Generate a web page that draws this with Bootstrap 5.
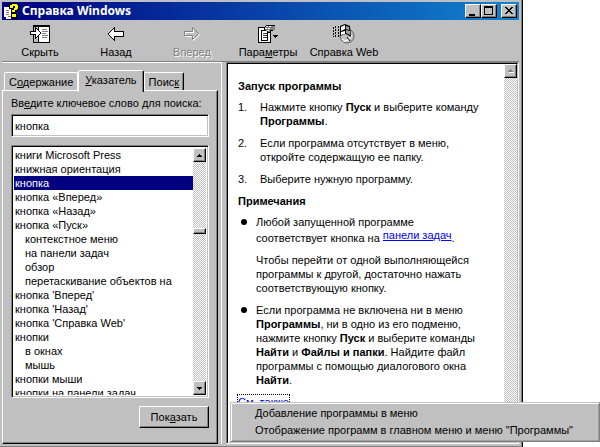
<!DOCTYPE html>
<html lang="ru">
<head>
<meta charset="utf-8">
<meta name="viewport" content="width=device-width, initial-scale=1">
<title>Справка Windows</title>
<link href="https://cdn.jsdelivr.net/npm/bootstrap@5.3.0/dist/css/bootstrap.min.css" rel="stylesheet">
<script src="https://cdn.jsdelivr.net/npm/bootstrap@5.3.0/dist/js/bootstrap.bundle.min.js"></script>
<style>
  :root { --face: #c0c0c0; --shade: #808080; --navy: #000080; }
  body { font: 11px/14px "Liberation Sans", Arial, sans-serif; color: #000; background: #fff; }
  button, input { font: inherit; color: inherit; border-radius: 0; }
  svg { display: block; shape-rendering: crispEdges; }
  .smooth { shape-rendering: auto; }
  .help-window { margin-right: 77px; padding: 2px 3px 3px 2px; background: var(--face); border-right: 1px solid #000; box-shadow: inset -1px 0 var(--shade), inset 0 -1px var(--shade); }
  .title-strip { height: 18px; padding: 0 2px; background: linear-gradient(90deg, #000080, #1084d0); color: #fff; }
  .title-strip h1 { font: bold 12px/18px "Noto Sans", sans-serif; margin: 0 0 0 2px; }
  .raised { background: var(--face); border: 1px solid; border-color: #fff #000 #000 #fff; box-shadow: inset -1px -1px var(--shade); padding: 0; }
  .win-btn { width: 16px; height: 14px; }
  .tool-strip { border-bottom: 1px solid var(--shade); height: 42px; }
  .tool { width: 76px; border: 0; background: none; padding: 4px 0 0; white-space: nowrap; display: flex; flex-direction: column; align-items: center; }
  .tool svg { margin-bottom: 1px; }
  .tool:disabled { color: var(--shade); text-shadow: 1px 1px #fff; }
  .panes { min-height: 0; }
  .left-side { width: 220px; padding-top: 7px; padding-right: 4px; border-top: 1px solid #fff; }
  .help-tabs { padding-left: 2px; height: 20px; align-items: flex-end; }
  .help-tabs .tab-btn { height: 18px; padding: 0 4px; background: var(--face); border: 1px solid #fff; border-bottom: 0; border-radius: 2px 2px 0 0; }
  .help-tabs .tab-btn.active { height: 22px; margin-bottom: -2px; padding: 0 6px 4px; position: relative; z-index: 1; border-right: 1px solid #000; box-shadow: inset -1px 0 var(--shade); }
  .help-tabs .tab-last { border-right-color: #000; box-shadow: inset -1px 0 var(--shade); }
  .index-pane { border: 1px solid; border-color: #fff #000 #000 #fff; box-shadow: inset -1px -1px var(--shade); padding: 5px 8px 15px; min-height: 0; }
  .sunken { background: #fff; border: 1px solid; border-color: var(--shade) #fff #fff var(--shade); box-shadow: inset 1px 1px #000, inset -1px -1px var(--face); border-radius: 0; }
  .key-input { height: 23px; width: 100%; padding: 2px 3px; outline: 0; }
  .index-box { padding: 2px; flex: 1 1 0; min-height: 0; overflow: hidden; }
  .index-list { overflow: hidden; border-radius: 0; }
  .index-list button { border: 0; background: none; text-align: left; padding: 0 1px; height: 14px; flex: none; white-space: nowrap; overflow: hidden; }
  .index-list .sub { padding-left: 11px; }
  .index-list .chosen { background: var(--navy); color: #fff; }
  .track { width: 13px; flex: none; background: repeating-conic-gradient(#fff 0 25%, var(--face) 0 50%) 0 0 / 2px 2px; }
  .track button { width: 13px; height: 14px; flex: none; display: flex; align-items: center; justify-content: center; }
  .track .thumb { height: 6px; margin-top: 66px; }
  .show-btn { width: 70px; height: 22px; }
  .topic-frame { border: 1px solid; border-color: var(--shade) #fff #fff var(--shade); box-shadow: -4px 0 var(--face), -5px 0 #fff; min-width: 0; }
  .topic-inner { border: 1px solid; border-color: #000 var(--face) var(--face) #000; background: #fff; min-width: 0; }
  .topic { padding: 15px 14px 0 10px; overflow: hidden; }
  .topic h2 { font: bold 11px/14px "Liberation Sans", Arial, sans-serif; margin: 0 0 7px; }
  .topic p { margin: 0 0 8px; }
  .topic li { display: flex; }
  .topic ol .marker { width: 22px; flex: none; }
  .topic ul .marker { width: 18px; padding: 4px 0 0 3px; flex: none; }
  .topic ul .marker::before { content: ""; display: block; width: 6px; height: 6px; border-radius: 50%; background: #000; }
  .topic a { color: #00f; }
  .link-line { display: block; padding-top: 2px; }
  .link-line a { position: relative; top: -3px; }
  .see-also { display: inline-block; outline: 1px dotted #000; }
  .popup { position: absolute; left: 230px; right: 0; bottom: 5px; padding: 2px; background: var(--face); border: 1px solid; border-color: var(--face) var(--shade) var(--shade) var(--face); box-shadow: inset 1px 1px #fff, inset -1px -1px #a0a0a0; }
  .popup button { display: block; border: 0; background: none; padding: 0 0 0 22px; line-height: 17px; width: 100%; text-align: left; white-space: nowrap; }
</style>
</head>
<body class="position-relative">
<main class="help-window d-flex flex-column vh-100">
  <header class="title-strip d-flex align-items-center">
    <svg width="16" height="17" viewBox="0 0 16 17" aria-hidden="true">
      <path d="M0 4h7v6h4v6H2v-2H0z" fill="#fff"/><path d="M2 7h3v1H2zM2 9h3v1H2zM2 11h3v1H2zM4 13h3v1H4z" fill="#808080"/>
      <path d="M5 1h2V0h6v1h2v6h-2v2h-1v2h1v5H7V8h2V6h1V5H9v1H5z"/><path d="M6 2h2V1h5v1h1v4h-1v1h-2v2H8V7h2V5h1V3H9v2H6zM8 11h4v3H8z" fill="#ff0"/>
    </svg>
    <h1 class="flex-grow-1">Справка Windows</h1>
    <button class="raised win-btn" aria-label="Свернуть"><svg width="14" height="12"><path d="M3 9h6v2H3z"/></svg></button>
    <button class="raised win-btn" aria-label="Развернуть"><svg width="14" height="12"><path d="M2 1h9v9H2zM3 3v6h7V3z" fill-rule="evenodd"/></svg></button>
    <button class="raised win-btn ms-1" aria-label="Закрыть"><svg width="14" height="12"><path d="M3 2h2v1h1v1h2V3h1V2h2v1h-1v1H9v1H8v1h1v1h1v1h1v1H9V8H8V7H6v1H5v1H3V8h1V7h1V6h1V5H5V4H4V3H3z"/></svg></button>
  </header>
  <nav class="tool-strip d-flex" aria-label="Панель инструментов">
    <button class="tool"><svg width="20" height="20" viewBox="0 0 20 20" aria-hidden="true">
      <path d="M3 1h17v18H3z"/><path d="M4 3h4v15H4z" fill="#c0c0c0"/><path d="M9 3h10v15H9z" fill="#fff"/>
      <path d="M12 5h5v1h-5zM12 7h6v1h-6zM12 9h4v1h-4zM12 11h6v1h-6zM12 13h5v1h-5z" fill="#808080"/>
      <path d="M0 7h5V3h1v1h1v1h1v1h1v1h1v1h1v2h-1v1H9v1H8v1H7v1H6v1H5v-4H0z"/><path d="M1 8h5V5h1v1h1v1h1v1h1v2H9v1H8v1H7v1H6v-3H1z" fill="#fff"/></svg><span>Скрыть</span></button>
    <button class="tool"><svg width="16" height="20" viewBox="0 0 16 20" aria-hidden="true">
      <path d="M0 9h1V8h1V7h1V6h1V5h1V4h1V3h1v4h9v6H7v4H6v-1H5v-1H4v-1H3v-1H2v-1H1v-1H0z"/><path d="M1 10V9h1V8h1V7h1V6h1V5h1v3h9v4H6v3H5v-1H4v-1H3v-1H2v-1H1z" fill="#fff"/></svg><span>Назад</span></button>
    <button class="tool" disabled><svg class="smooth" width="17" height="20" viewBox="0 0 17 20" aria-hidden="true">
      <path d="M1.500 8.500h8v-4l6 6-6 6v-4h-8z" fill="none" stroke="#fff"/><path d="M.5 7.500h8v-4l6 6-6 6v-4h-8z" fill="none" stroke="#808080"/></svg><span>Вперед</span></button>
    <button class="tool"><svg width="22" height="20" viewBox="0 0 22 20" aria-hidden="true">
      <path d="M1 3h13v16H1z"/><path d="M2 4h11v14H2z" fill="#fff"/><path d="M4 6h7v11H4z"/><path d="M5 7h5v9H5z" fill="#fff"/><path d="M6 9h4v1H6zM6 11h4v1H6zM6 13h4v1H6z" fill="#404040"/>
      <path d="M7 4h1V2h1V1h9v5h-3v1h-2v2h-2V7H9V6H7z" fill="#808080"/><path d="M9 2h2v1H9zM12 2h2v1h-2zM8 4h2v1H8zM11 4h2v1h-2zM10 6h2v1h-2z" fill="#fff"/><path d="M7 4h1V2h1V1h9v1H9v1H8v3H7zM11 8h2V6h3v1h-2v2h-3z"/>
      <path d="M16 11h5v1h-1v1h-1v1h-1v-1h-1v-1h-1z"/></svg><span>Пара<u>м</u>етры</span></button>
    <button class="tool"><svg class="smooth" width="22" height="20" viewBox="0 0 22 20" aria-hidden="true">
      <circle cx="14" cy="12" r="7" fill="#c0c0c0" stroke="#606060"/><path d="M9 15q5 4 9-3M10 17q6 1 9-6" fill="none" stroke="#fff"/>
      <path d="M7 2l5-2 5 2 1 11-5-3-6 2z"/><path d="M8 3l4-2v4l-4 2zM8 8l4-1v3l-4 1z" fill="#fff"/><path d="M13 2l3 1v3l-3-1zM13 6l4 1v4l-4-2z" fill="#a0a0a0"/>
      <path d="M5.500 2v11M2.500 2v11M.5 3v10" stroke="#000" stroke-dasharray="2 1"/><path d="M14 13l3 4" stroke="#000"/></svg><span>Справка Web</span></button>
  </nav>
  <div class="panes d-flex flex-grow-1">
    <section class="left-side d-flex flex-column flex-shrink-0">
      <div class="help-tabs d-flex" role="tablist">
        <button class="tab-btn" role="tab">С<u>о</u>держание</button>
        <button class="tab-btn active" role="tab" aria-selected="true"><u>У</u>казатель</button>
        <button class="tab-btn tab-last" role="tab">Поис<u>к</u></button>
      </div>
      <div class="index-pane d-flex flex-column flex-grow-1" role="tabpanel">
        <label for="keyword" class="mb-1">Вв<u>е</u>дите ключевое слово для поиска:</label>
        <input id="keyword" class="sunken key-input" type="text" value="кнопка">
        <div class="index-box sunken d-flex mt-2">
          <div class="index-list list-group flex-grow-1">
            <button>книги Microsoft Press</button>
            <button>книжная ориентация</button>
            <button class="chosen">кнопка</button>
            <button>кнопка «Вперед»</button>
            <button>кнопка «Назад»</button>
            <button>кнопка «Пуск»</button>
            <button class="sub">контекстное меню</button>
            <button class="sub">на панели задач</button>
            <button class="sub">обзор</button>
            <button class="sub">перетаскивание объектов на</button>
            <button>кнопка 'Вперед'</button>
            <button>кнопка 'Назад'</button>
            <button>кнопка 'Справка Web'</button>
            <button>кнопки</button>
            <button class="sub">в окнах</button>
            <button class="sub">мышь</button>
            <button>кнопки мыши</button>
            <button>кнопки на панели задач</button>
          </div>
          <div class="track d-flex flex-column">
            <button class="raised" aria-label="Вверх"><svg width="5" height="3"><path d="M2 0h1v1h1v1h1v1H0V2h1V1h1z"/></svg></button>
            <button class="raised thumb" aria-label="Ползунок"></button>
            <button class="raised mt-auto" aria-label="Вниз"><svg width="5" height="3"><path d="M0 0h5v1H4v1H3v1H2V2H1V1H0z"/></svg></button>
          </div>
        </div>
        <button class="raised show-btn align-self-end mt-2">Пок<u>а</u>зать</button>
      </div>
    </section>
    <section class="topic-frame ms-1 flex-grow-1 d-flex">
      <div class="topic-inner d-flex flex-grow-1">
        <article class="topic flex-grow-1">
          <h2>Запуск программы</h2>
          <ol class="list-unstyled m-0">
            <li><span class="marker">1.</span><p>Нажмите кнопку <b>Пуск</b> и выберите команду <b>Программы</b>.</p></li>
            <li><span class="marker">2.</span><p>Если программа отсутствует в меню,<br>откройте содержащую ее папку.</p></li>
            <li><span class="marker">3.</span><p>Выберите нужную программу.</p></li>
          </ol>
          <h2>Примечания</h2>
          <ul class="list-unstyled m-0">
            <li><span class="marker"></span><div><p>Любой запущенной программе <span class="link-line">соответствует кнопка на <a href="#taskbar">панели задач</a>.</span></p>
              <p>Чтобы перейти от одной выполняющейся<br>программы к другой, достаточно нажать<br>соответствующую кнопку.</p></div></li>
            <li><span class="marker"></span><p>Если программа не включена ни в меню<br><b>Программы</b>, ни в одно из его подменю,<br>нажмите кнопку <b>Пуск</b> и выберите команды<br><b>Найти</b> и <b>Файлы и папки</b>. Найдите файл<br>программы с помощью диалогового окна<br><b>Найти</b>.</p></li>
          </ul>
          <a class="see-also" href="#related">См. также</a>
        </article>
        <div class="track d-flex flex-column">
          <button class="raised" aria-label="Вверх" disabled><svg width="6" height="4"><path d="M3 1h1v1h1v1h1v1H1V3z" fill="#fff"/><path d="M2 0h1v1h1v1h1v1H0V2h1V1h1z" fill="#808080"/></svg></button>
          <button class="raised mt-auto" aria-label="Вниз" disabled></button>
        </div>
      </div>
    </section>
  </div>
</main>
<div class="popup" role="menu">
  <button role="menuitem">Добавление программы в меню</button>
  <button role="menuitem">Отображение программ в главном меню и меню "Программы"</button>
</div>
</body>
</html>
